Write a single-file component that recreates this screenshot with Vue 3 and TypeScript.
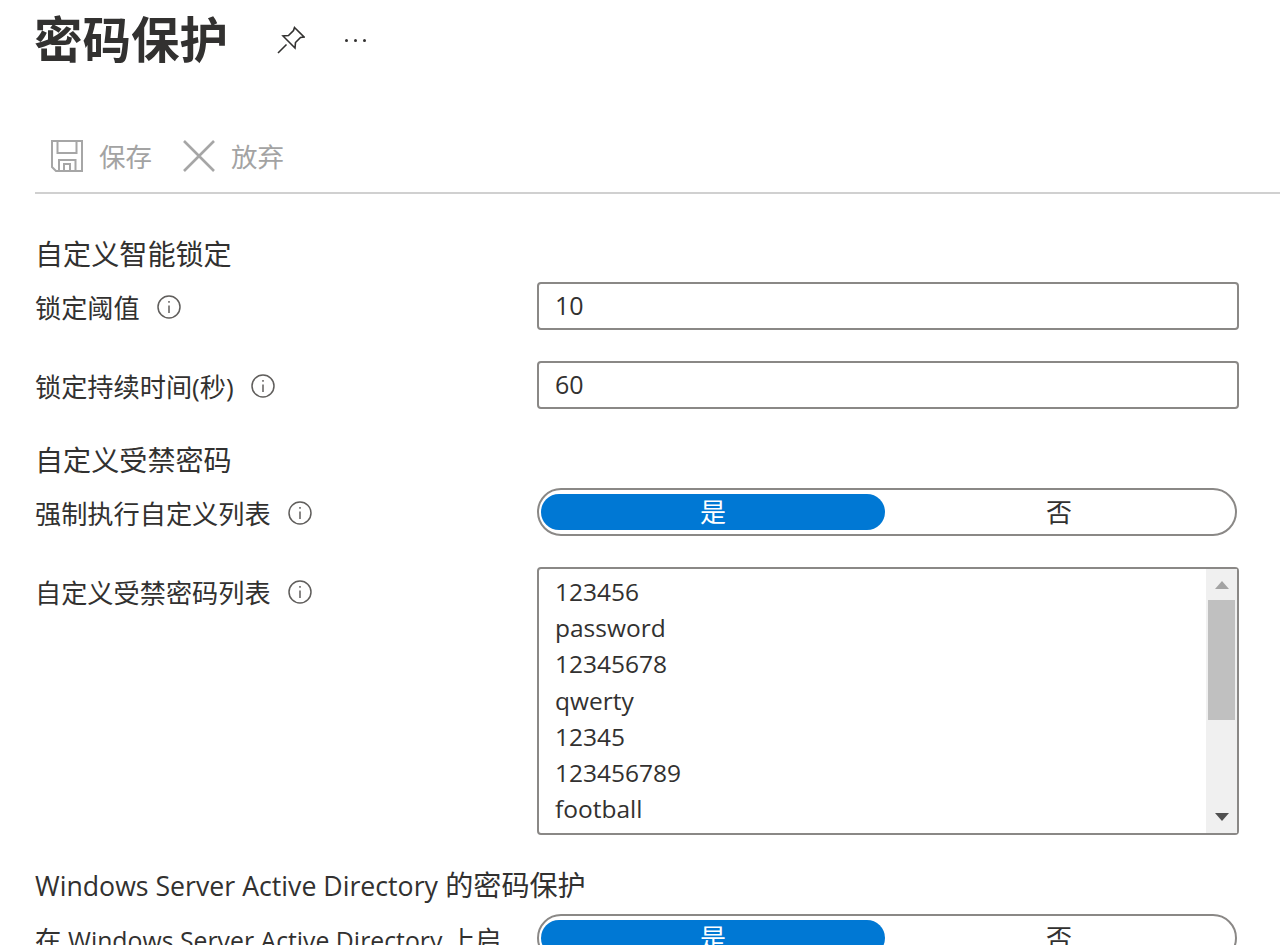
<script setup lang="ts">
const words: string[] = ['123456', 'password', '12345678', 'qwerty', '12345', '123456789', 'football']
</script>

<template>
  <div class="page">
    <header class="title-row">
      <h1 class="title">密码保护</h1>
      <svg class="pin" viewBox="0 0 28 28" width="28" height="28" fill="none" stroke="#323130" stroke-width="1.6">
        <path d="M1 27 L9.5 18.5" />
        <path d="M17.5 1.5 L27 11 L23.5 11.5 L18.5 16.5 L18 22 L6 10 L11.5 9.5 L16.5 4.5 Z" stroke-linejoin="miter" />
      </svg>
      <div class="dots"><i></i><i></i><i></i></div>
    </header>

    <nav class="toolbar">
      <button class="tool save">
        <svg viewBox="0 0 32 32" width="32" height="32" fill="none" stroke="#a6a6a6" stroke-width="2">
          <path d="M1 1 H31 V31 H5 L1 27 Z" />
          <path d="M6.5 1 V13 H25.5 V1" />
          <path d="M8 31 V20 H24.500 V31" />
          <path d="M13 31 V24 H19 V31" />
        </svg>
        <span>保存</span>
      </button>
      <button class="tool discard">
        <svg viewBox="0 0 32 32" width="32" height="32" fill="none" stroke="#a6a6a6" stroke-width="2.6">
          <path d="M1 1 L31 31 M31 1 L1 31" />
        </svg>
        <span>放弃</span>
      </button>
    </nav>

    <main class="form">
      <h2 class="section first">自定义智能锁定</h2>
      <div class="row">
        <label class="label">锁定阈值<svg class="info" viewBox="0 0 24 24" width="24" height="24" fill="none" stroke="#605e5c" stroke-width="1.5"><circle cx="12" cy="12" r="11" /><path d="M12 10.500 V18" /><path d="M12 6 V7.800" /></svg></label>
        <div class="input">10</div>
      </div>
      <div class="row gap">
        <label class="label">锁定持续时间(秒)<svg class="info" viewBox="0 0 24 24" width="24" height="24" fill="none" stroke="#605e5c" stroke-width="1.5"><circle cx="12" cy="12" r="11" /><path d="M12 10.500 V18" /><path d="M12 6 V7.800" /></svg></label>
        <div class="input">60</div>
      </div>

      <h2 class="section">自定义受禁密码</h2>
      <div class="row">
        <label class="label">强制执行自定义列表<svg class="info" viewBox="0 0 24 24" width="24" height="24" fill="none" stroke="#605e5c" stroke-width="1.5"><circle cx="12" cy="12" r="11" /><path d="M12 10.500 V18" /><path d="M12 6 V7.800" /></svg></label>
        <div class="toggle"><span class="on">是</span><span class="off">否</span></div>
      </div>
      <div class="row gap">
        <label class="label">自定义受禁密码列表<svg class="info" viewBox="0 0 24 24" width="24" height="24" fill="none" stroke="#605e5c" stroke-width="1.5"><circle cx="12" cy="12" r="11" /><path d="M12 10.500 V18" /><path d="M12 6 V7.800" /></svg></label>
        <div class="list">
          <div class="lines">
            <div v-for="w in words" :key="w" class="line">{{ w }}</div>
          </div>
          <div class="scrollbar">
            <div class="arrow up"></div>
            <div class="thumb"></div>
            <div class="arrow down"></div>
          </div>
        </div>
      </div>

      <h2 class="section last"><span class="latin-h">Windows Server Active Directory</span> 的密码保护</h2>
      <div class="row">
        <label class="label"><span>在 <span class="latin-l">Windows Server Active Directory</span> 上启</span></label>
        <div class="toggle"><span class="on">是</span><span class="off">否</span></div>
      </div>
    </main>
  </div>
</template>

<style>
html, body { margin: 0; background: #fff; overflow: hidden; }
</style>

<style scoped>
.page {
  width: 1280px;
  height: 945px;
  overflow: hidden;
  box-sizing: border-box;
  padding-left: 35px;
  font-family: "Open Sans", "Noto Sans CJK SC", sans-serif;
  color: #323130;
  background: #fff;
}
.title-row {
  display: flex;
  align-items: center;
  height: 80px;
}
.title {
  margin: -2px 0 0 -1px;
  font-size: 48.500px;
  line-height: 78px;
  font-weight: 700;
  width: 243px;
}
.dots {
  display: flex;
  gap: 6px;
  margin-left: 40px;
}
.dots i {
  display: block;
  width: 3px;
  height: 3px;
  border-radius: 50%;
  background: #323130;
}
.toolbar {
  display: flex;
  align-items: flex-start;
  height: 114px;
  padding: 56px 0 0 16px;
  box-sizing: border-box;
  border-bottom: 2px solid #d0d0d0;
}
.tool {
  display: flex;
  align-items: center;
  gap: 16px;
  padding: 0;
  border: 0;
  background: none;
  font: inherit;
  font-size: 26.500px;
  color: #a3a3a3;
}
.discard { margin-left: 31px; }
.form { padding-top: 43px; }
.section {
  margin: 34px 0 11px;
  font-size: 28.100px;
  line-height: 34px;
  font-weight: 400;
}
.section.first { margin-top: 0; }
.section.last { margin-top: 33px; }
.latin-h { font-size: 26.700px; }
.latin-l { font-size: 24.800px; }
.row {
  display: flex;
  align-items: flex-start;
}
.row.gap { margin-top: 31px; }
.label {
  display: flex;
  align-items: center;
  width: 502px;
  height: 48px;
  box-sizing: border-box;
  padding-top: 2px;
  font-size: 26.200px;
  white-space: nowrap;
}
.info { margin-left: 17px; }
.input {
  width: 702px;
  height: 48px;
  box-sizing: border-box;
  border: 2px solid #8a8886;
  border-radius: 4px;
  padding-left: 16px;
  font-size: 25px;
  line-height: 42px;
}
.toggle {
  display: flex;
  width: 700px;
  height: 48px;
  box-sizing: border-box;
  border: 2px solid #8a8886;
  border-radius: 24px;
  padding: 4px 2px;
  font-size: 26px;
  line-height: 36px;
  text-align: center;
}
.toggle .on {
  flex: none;
  width: 344px;
  background: #0078d4;
  color: #fff;
  border-radius: 18px;
}
.toggle .off { flex: 1; }
.list {
  display: flex;
  width: 702px;
  height: 268px;
  box-sizing: border-box;
  border: 2px solid #8a8886;
  border-radius: 4px;
}
.lines {
  flex: 1;
  padding: 5px 0 0 16px;
  font-size: 24.500px;
}
.line { height: 36.200px; line-height: 36.200px; }
.scrollbar {
  display: flex;
  flex-direction: column;
  align-items: center;
  width: 31px;
  background: #f0f0f0;
}
.arrow {
  width: 0;
  height: 0;
  border-left: 7.5px solid transparent;
  border-right: 7.5px solid transparent;
}
.arrow.up { margin-top: 12px; border-bottom: 8px solid #a3a3a3; }
.thumb {
  width: 27px;
  height: 120px;
  margin-top: 11px;
  background: #c0c0c0;
}
.arrow.down { margin-top: auto; margin-bottom: 12px; border-top: 8px solid #505050; }
</style>
